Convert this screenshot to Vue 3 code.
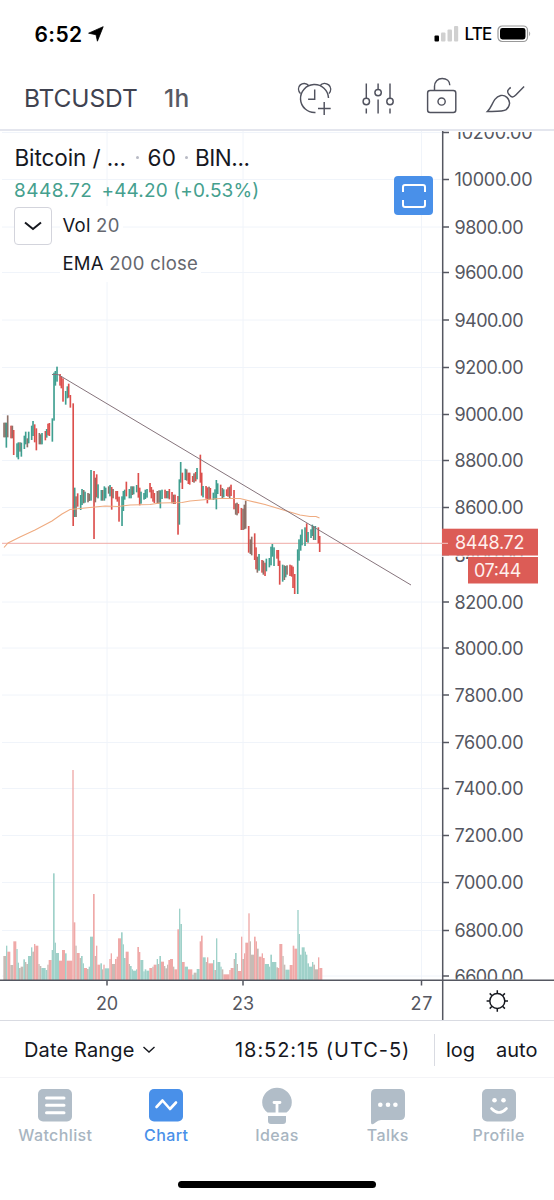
<script setup>
const GREEN = '#3f9f90'
const RED = '#dc4f4c'
const MIXED = '#8d7168'
const palette = { g: GREEN, r: RED, m: MIXED }
const volPalette = { g: '#9fd1c9', r: '#efa9a8', m: '#c6bbb5' }

// price scale labels with their vertical positions
const prices = [
  ['10200.00', 132.5], ['10000.00', 179.5], ['9800.00', 227], ['9600.00', 272.5],
  ['9400.00', 320], ['9200.00', 367.5], ['9000.00', 414.5], ['8800.00', 460.5],
  ['8600.00', 507.5], ['8400.00', 555], ['8200.00', 602], ['8000.00', 648],
  ['7800.00', 695], ['7600.00', 742.5], ['7400.00', 788.5], ['7200.00', 835.5],
  ['7000.00', 882.5], ['6800.00', 930.5], ['6600.00', 976]
].map(([label, y]) => ({ label, y, width: label.length === 8 ? 78 : 69 }))

const days = [
  { label: '20', x: 107 },
  { label: '23', x: 243 },
  { label: '27', x: 421.5 }
]

// candles: centre, high, low, kind (third-pixel units)
const earlyCandles = `12 203 247 m,16 203 247 m,19 203 278 g,23 181 247 m,33 212 250 r,37 212 250 m,41 225 300 r,51 265 307 g,55 262 313 g,60 262 290 m,64 263 305 g,73 242 282 g,77 230 268 g,82 250 277 m,86 230 265 g,95 212 255 g,99 198 243 g,104 208 262 r,109 220 286 r,118 234 268 m,122 238 268 m,126 234 268 g,136 228 256 r,140 222 248 g,144 206 241 r,148 204 243 r,157 190 260 g,162 53 197 g,166 48 92 g,171 35 80 g,180 57 92 r,184 64 100 r,189 70 140 r,197 108 149 g,202 94 130 g,206 86 128 r,211 120 158 r,219.5 145 513 r,224 398 486 g,228 424 486 m,233 415 455 r,242 420 465 g,246 402 450 g,251 405 445 m,255 410 443 g,264 414 442 m,268 416 438 m,273 345 437 g,282 348 552 r,286 368 442 m,290 358 427 r,294 388 430 g,304 405 437 g,308 405 437 m,313 394 437 g,317 398 430 g,326 394 416 m,330 390 424 g,335 396 464 r,339 402 430 m,348 408 433 r,352 408 440 r,357 425 500 r,366 424 513 g,370 408 468 g,374 404 434 g,379 380 424 r,388 402 430 g,393 394 430 g,397 394 420 m,401 394 418 g,410 390 412 g,415 354 428 r,419 398 451 r,423 410 446 g,432 414 434 g,436 404 432 g,441 402 428 g,450 384 412 r,454 396 430 r,459 404 440 r,463 414 444 r,472 408 446 m,477 406 446 m,481 406 460 g,486 404 432 g,495 404 430 r,500 408 430 m,504 408 430 g,508 402 433 r`
const lateCandles = `36 156 190 r,41 164 192 m,45 164 192 r,54 168 284 r,58 118 254 g,62 66 128 g,67 98 147 r,76 86 120 g,80 88 122 m,85 98 132 r,89 98 134 r,98 108 126 r,102 100 128 m,107 96 124 r,111 84 118 g,121 44 128 r,125 98 167 r,129 138 172 g,138 138 176 r,142 142 190 r,147 140 180 m,151 144 178 r,160 158 180 g,165 148 178 g,169 120 208 g,173 130 162 g,182 134 168 r,187 144 176 m,191 148 172 g,200 148 168 r,204 142 170 r,209 140 174 m,213 134 168 r,222 150 208 r,227 190 224 m,231 188 226 m,235 192 220 r,244 204 270 r,249 206 270 m,253 194 268 m,257 182 266 m,266 258 338 r,271 298 342 m,275 290 346 m,284 280 360 r,288 322 388 r,292 350 398 m,297 342 392 g,306 360 398 r,310 362 404 m,315 368 408 r,319 356 394 g,328 354 382 g,333 320 376 g,337 312 350 g,342 322 378 g,351 330 356 r,355 330 378 r,359 362 434 r,368 374 425 g,373 376 420 m,377 378 412 g,381 376 404 m,390 374 408 r,395 376 410 r,399 380 444 r,404 402 462 r,413 328 462 g,417 298 362 g,422 284 332 g,426 268 316 g,435 262 318 g,440 250 306 r,444 276 308 g,453 268 294 g,457 254 288 g,461 258 300 m,466 258 300 g,475 262 310 r,479 288 336 r`
const parseCandles = (src, ox, oy) =>
  src.split(',').map((item) => {
    const [x, hi, lo, kind] = item.split(' ')
    return { x: ox + x / 3 - 0.8, y: oy + hi / 3, h: (lo - hi) / 3, fill: palette[kind] }
  })
const candles = [...parseCandles(earlyCandles, 0, 355), ...parseCandles(lateCandles, 160, 440)]

// volume: right edge, top, kind; every bar starts where the previous one ended
const earlyVolume = `18 588 m,22 557 g,31 575 r,40 615 m,49 544 r,53 567 g,57 608 g,62 624 m,70 620 m,75 598 g,79 606 m,84 612 m,93 588 g,97 562 g,102 575 m,106 552 r,115 557 r,119 612 m,124 618 m,137 624 g,142 630 g,146 614 m,155 600 r,159 570 g,164 340 g,168 548 g,177 579 g,186 602 r,195 570 r,200 580 g,217 602 r,221 30 r,226 487 r,230 557 m,239 579 r,243 594 m,248 588 g,252 610 g,261 624 r,266 627 m,270 620 g,279 530 g,284 402 r,288 588 m,292 557 r,301 614 r,306 610 g,310 628 m,314 614 r,328 625 g,332 597 r,336 580 r,345 612 m,350 597 r,354 590 r,363 535 r,368 517 g,372 553 g,377 594 g,386 575 r,390 612 m,395 618 g,399 628 g,408 632 g,412 628 g,417 561 r,421 576 r,430 600 g,434 634 g,439 628 g,448 632 g,457 624 r,461 620 m,470 614 r,474 597 g,478 612 m,483 588 g,492 605 r,496 618 m,501 625 m,505 614 m,510 600 r`
const lateVolume = `39 297 r,43 320 m,52 328 r,57 208 r,61 146 g,66 192 g,74 306 r,84 320 g,97 328 r,101 344 g,110 338 m,119 327 g,123 244 r,128 227 r,137 292 g,141 306 m,145 292 r,159 310 r,163 300 g,168 330 m,172 235 g,181 306 g,185 320 g,190 328 m,208 343 r,212 330 r,221 324 r,225 297 m,230 279 g,234 312 m,243 333 r,247 230 r,252 297 m,256 280 r,265 248 r,269 160 r,273 244 m,282 284 m,287 230 r,291 244 r,296 266 m,305 290 r,309 280 r,314 294 r,327 312 g,331 320 g,336 284 g,349 306 g,354 322 m,358 324 r,367 252 r,371 288 m,376 314 m,389 329 g,398 315 r,403 257 r,412 266 r,416 150 g,420 222 g,425 284 g,434 262 g,438 275 g,442 284 g,447 310 g,456 320 g,460 306 g,465 314 m,474 328 m,478 292 r,487 324 r`
const parseVolume = (src, ox, oy, start) => {
  let left = start
  return src.split(',').map((item) => {
    const [right, top, kind] = item.split(' ')
    const bar = { x: ox + left / 3, w: (right - left) / 3, y: oy + top / 3, fill: volPalette[kind] }
    bar.h = 980 - bar.y
    left = Number(right)
    return bar
  })
}
const volume = [...parseVolume(earlyVolume, 0, 760, 10), ...parseVolume(lateVolume, 160, 860, 30)]
</script>

<template>
  <div class="screen">
    <header class="status">
      <span class="clock">6:52</span>
      <svg class="loc" width="16" height="16" viewBox="0 0 16 16"><path d="M15.2.7 9.4 15.2 8 8.7.6 7.2Z" fill="#000" stroke="#000" stroke-linejoin="round" stroke-width=".8" /></svg>
      <svg class="signal" width="26" height="18" viewBox="0 0 26 18">
        <rect x=".5" y="10.500" width="4.500" height="6" rx="1" fill="#000" />
        <rect x="7" y="7.500" width="4.500" height="9" rx="1" fill="#d0d0d0" />
        <rect x="13.500" y="4.500" width="4.500" height="12" rx="1" fill="#d0d0d0" />
        <rect x="20" y="1" width="4.200" height="15.500" rx="1" fill="#d0d0d0" />
      </svg>
      <span class="lte">LTE</span>
      <svg class="battery" width="36" height="18" viewBox="0 0 36 18">
        <rect x="1" y="1" width="29.500" height="15.500" rx="4.200" fill="none" stroke="#999" stroke-width="1.200" />
        <rect x="3" y="3" width="25.500" height="11.500" rx="2.400" fill="#000" />
        <path d="M32.200 6.300q2 2.400 0 5Z" fill="#999" />
      </svg>
    </header>

    <div class="toolbar">
      <span class="symbol">BTCUSDT</span>
      <span class="interval">1h</span>
      <svg class="tools" width="254" height="50" viewBox="290 72 254 50" fill="none" stroke="#50525e" stroke-width="1.450">
        <path d="M315.500 111.500a14 14 0 1 1 13-14.500" />
        <path d="M300.500 92.600c-2.600-3-2.600-6.500-.2-8.700 2.400-2.100 6-2.100 8.500.8M320 84.700c2.400-2.900 6-2.900 8.700-.8 2.600 2.400 2.600 5.900.2 8.700" />
        <path d="M314.700 88.500v9.700h-6.600M318 107.500h12.700M324.200 101v13" />
        <path d="M366.300 82.500v14.800M366.300 107.500v5M378.100 82.500v5.800M378.100 98.500v14M390 82.500v14.800M390 107.500v5" />
        <circle cx="366.300" cy="100.500" r="3.200" /><circle cx="378.100" cy="91.600" r="3.200" /><circle cx="390" cy="100.500" r="3.200" />
        <rect x="427.600" y="89.500" width="28.200" height="22" rx="2.500" />
        <path d="M434.500 89.500v-4c0-4.700 3.200-8 7.700-8s7.600 2.500 7.600 6.800" />
        <circle cx="441.600" cy="100.500" r="3.600" />
        <path d="M487.500 110.400c3.400-3 4.500-8 7.400-12 3.200-4.300 8.400-5.400 12-2 3.800 3.600 3.500 8.700-.7 12.200-2.700 2.100-7 1.800-18.700 1.800ZM510.800 86.500c-3 1.700-4.200 4-2 6.800 2.500 3.300 4.400 3.500 7 .8l8.300-8.600" />
      </svg>
    </div>

    <main class="chart">
      <svg class="plot" width="554" height="889" viewBox="0 131 554 889">
        <g stroke="#f0f4fa" stroke-width="1">
          <line v-for="p in prices" :key="p.label" x1="2" x2="442" :y1="p.y" :y2="p.y" />
          <line v-for="d in days" :key="d.label" :x1="d.x" :x2="d.x" y1="131" y2="980" />
        </g>
        <rect v-for="(b, i) in volume" :key="'v' + i" :x="b.x" :y="b.y" :width="b.w" :height="b.h" :fill="b.fill" />
        <line x1="2" x2="442" y1="543.300" y2="543.300" stroke="#efaaa6" />
        <rect v-for="(c, i) in candles" :key="'c' + i" :x="c.x" :y="c.y" width="1.650" :height="c.h" :fill="c.fill" />
        <path d="M4 547.500 8 543 20 537 35 530 52 521 62 514 70 509.500 80 508.500 90 507.500 105 506 118 506.500 130 505 150 504.500 160 503 182 502.500 190 501 207 499.500 220 498.500 240 498.500 250 501 265 504.500 285 510.500 300 515 310 516.500 316 516.500 319.500 518" fill="none" stroke="#efab80" stroke-width="1.100" />
        <path d="M52 374.500h6l353 210.500" fill="none" stroke="#86747c" stroke-width="1" />

        <g stroke="#555761" stroke-width="1.500">
          <path d="M442.700 131v889M0 980.300h554" />
          <line v-for="p in prices" :key="'t' + p.label" x1="443" x2="449" :y1="p.y" :y2="p.y" />
          <line v-for="d in days" :key="'d' + d.label" :x1="d.x" :x2="d.x" y1="980" y2="985.500" />
        </g>
        <clipPath id="scale"><rect x="450" y="132" width="104" height="847.500" /></clipPath>
        <g class="scale-text" clip-path="url(#scale)">
          <text v-for="p in prices" :key="'l' + p.label" x="454.500" :y="p.y + 6.800" :textLength="p.width">{{ p.label }}</text>
        </g>
        <g class="scale-text" text-anchor="middle">
          <text v-for="d in days" :key="'x' + d.label" :x="d.x" y="1009.600" textLength="22">{{ d.label }}</text>
        </g>

        <rect x="442" y="528.700" width="96" height="27" fill="#dc5c56" />
        <rect x="442" y="555.700" width="96" height="1.300" fill="#fff" opacity=".8" />
        <rect x="468" y="557" width="70" height="26.500" fill="#dc5c56" />
        <path d="M442 543.300h6" stroke="#f5c9c5" />
        <g class="scale-text light">
          <text x="455" y="548.700" textLength="69.500">8448.72</text>
          <text x="474" y="576.700" textLength="47.500">07:44</text>
        </g>

        <g stroke="#16181f" stroke-width="1.500" fill="none">
          <circle cx="497.300" cy="1001" r="7.500" />
          <path d="M497.300 990.300v3M497.300 1008.700v3M486.600 1001h3M505 1001h3M489.700 993.400l2.100 2.100M502.800 1006.500l2.100 2.100M489.700 1008.600l2.100-2.100M502.800 995.500l2.100-2.100" />
        </g>
      </svg>

      <section class="legend">
        <div class="title"><span class="name">Bitcoin / ...</span><i></i><span class="res">60</span><i></i><span class="exch">BIN...</span></div>
        <div class="quote"><span class="last">8448.72</span><span class="change">+44.20 (+0.53%)</span></div>
        <div class="studies">
          <button class="toggle"><svg width="20" height="12" viewBox="0 0 20 12"><path d="M2 2.500 10 9l8-6.500" fill="none" stroke="#16181f" stroke-width="2" /></svg></button>
          <div class="list">
            <div class="study vol">Vol <em>20</em></div>
            <div class="study ema">EMA <em>200 close</em></div>
          </div>
        </div>
      </section>

      <button class="fullscreen"><svg width="26" height="26" viewBox="0 0 26 26"><path d="M2 9V4q0-2 2-2h18q2 0 2 2v5M2 17v5q0 2 2 2h18q2 0 2-2v-5" fill="none" stroke="#fff" stroke-width="2" /></svg></button>
    </main>

    <div class="rangebar">
      <span class="range">Date Range</span>
      <svg class="caret" width="14" height="9" viewBox="0 0 14 9"><path d="M1.500 2 7 7l5.500-5" fill="none" stroke="#16181f" stroke-width="1.400" /></svg>
      <span class="time">18:52:15 (UTC-5)</span>
      <span class="log">log</span>
      <span class="auto">auto</span>
    </div>

    <nav class="tabs">
      <div class="tab">
        <svg width="38" height="38" viewBox="0 0 38 38"><rect x="2" y="2" width="34" height="32.500" rx="5" fill="currentColor" /><path d="M10.500 11h17.500M10.500 18.300h17.500M10.500 25.700h17.500" stroke="#fff" stroke-width="3" stroke-linecap="round" /></svg>
        <span class="watch">Watchlist</span>
      </div>
      <div class="tab active">
        <svg width="38" height="38" viewBox="0 0 38 38"><rect x="2" y="2" width="34" height="32.500" rx="5" fill="currentColor" /><path d="m9.500 20 6-6.500 7.500 8.500 6-6.500" fill="none" stroke="#fff" stroke-width="2.600" stroke-linecap="round" stroke-linejoin="round" /></svg>
        <span class="chartlabel">Chart</span>
      </div>
      <div class="tab">
        <svg width="38" height="38" viewBox="0 0 38 38"><path d="M9.500 25.500C6 23 4.200 19.500 4.200 15.500a14.800 14.800 0 0 1 29.600 0c0 4-1.800 7.500-5.300 10ZM10 29h18v5q0 3-3 3H13q-3 0-3-3Z" fill="currentColor" /><path d="M16 15.500h6M19 15.500V26" stroke="#fff" stroke-width="2.800" stroke-linecap="round" /></svg>
        <span class="ideas">Ideas</span>
      </div>
      <div class="tab">
        <svg width="38" height="38" viewBox="0 0 38 38"><path d="M7 2h24q5 0 5 5v21q0 5-5 5H12q-3 0-5.500 2.500Q4 38 2.500 37 2 36.700 2 35V7q0-5 5-5Z" fill="currentColor" /><g fill="#fff"><circle cx="11.300" cy="17.700" r="2.300" /><circle cx="19" cy="17.700" r="2.300" /><circle cx="26.400" cy="17.700" r="2.300" /></g></svg>
        <span class="talks">Talks</span>
      </div>
      <div class="tab">
        <svg width="38" height="38" viewBox="0 0 38 38"><rect x="2" y="2" width="34" height="32.500" rx="5" fill="currentColor" /><g fill="#fff"><circle cx="14.500" cy="13.300" r="2.300" /><circle cx="23.500" cy="13.300" r="2.300" /></g><path d="M11.500 21.500q7.500 8 15 0" fill="none" stroke="#fff" stroke-width="2.600" stroke-linecap="round" /></svg>
        <span class="profile">Profile</span>
      </div>
    </nav>
    <div class="home"></div>
  </div>
</template>

<style>
body { margin: 0; background: #fff; }
</style>

<style scoped>
.screen { width: 554px; height: 1200px; display: flex; flex-direction: column; overflow: hidden; background: #fff; font-family: Inter, "Liberation Sans", sans-serif; color: #16181f; }
.screen span, .study { white-space: nowrap; }
svg { display: block; flex: none; }
button { padding: 0; display: flex; align-items: center; justify-content: center; }

.status { height: 68px; box-sizing: border-box; flex: none; display: flex; align-items: center; padding-left: 34.500px; color: #000; }
.clock { width: 49px; font-size: 21px; font-weight: 600; letter-spacing: .4px; }
.loc { margin-left: 4.500px; }
.signal { margin-left: 329.500px; }
.lte { width: 27px; margin-left: 5px; font-size: 17px; font-weight: 500; letter-spacing: -.8px; }
.battery { margin-left: 5px; }

.toolbar { height: 63px; box-sizing: border-box; flex: none; display: flex; align-items: center; padding: 0 0 2px 24px; border-bottom: 2px solid #e4e6ee; color: #40424f; font-size: 24.500px; }
.symbol { width: 113px; letter-spacing: -.1px; }
.interval { width: 28px; margin-left: 27px; color: #585a64; font-weight: 500; letter-spacing: .3px; }
.tools { margin-left: 98px; }

.chart { height: 889px; flex: none; position: relative; }
.scale-text { font-size: 18px; fill: #555761; }
.light { fill: #fff0ee; }
.legend { position: absolute; left: 14px; top: 12px; }
.title { display: flex; align-items: center; height: 28px; font-size: 22.500px; }
.title i { width: 3px; height: 3px; border-radius: 50%; background: #b8bac4; }
.name { width: 121.500px; padding-left: .5px; letter-spacing: -.1px; }
.res { margin-left: 8.500px; width: 37px; letter-spacing: .3px; }
.exch { margin-left: 7.500px; letter-spacing: -.45px; }
.quote { display: flex; align-items: center; height: 34px; padding-top: 4px; box-sizing: border-box; font-size: 19px; color: #459f8e; }
.last { width: 87.500px; letter-spacing: .45px; }
.change { letter-spacing: .12px; }
.studies { display: flex; align-items: flex-start; }
.toggle { width: 38px; height: 38px; box-sizing: border-box; border: 1.500px solid #d3d4dc; border-radius: 4px; background: #fff; margin-top: 2px; }
.list { margin-left: 7.500px; padding-top: 1px; }
.study { height: 38px; line-height: 38px; padding: 0 3px; font-size: 18.500px; width: max-content; letter-spacing: .25px; background: #fff; }
.study em { font-style: normal; color: #65676f; }
.fullscreen { position: absolute; left: 394px; top: 45px; width: 39px; height: 39px; border: 0; border-radius: 4px; background: #4990e9; }

.rangebar { height: 58px; box-sizing: border-box; flex: none; display: flex; align-items: center; padding: 1px 0 0 24px; border-top: 1.500px solid #d9dbe2; border-bottom: 1px solid #f4f4f7; font-size: 20px; }
.range { width: 111px; letter-spacing: .15px; }
.caret { margin-left: 7px; }
.time { width: 175px; margin-left: 79px; letter-spacing: .95px; }
.log { margin-left: 24px; padding-left: 11px; line-height: 32px; border-left: 1px solid #d9dbe2; width: 38px; }
.auto { margin-left: 12px; }

.tabs { height: 91px; flex: none; display: grid; grid-template-columns: repeat(5, 1fr); padding-top: 9px; box-sizing: border-box; }
.tab { display: flex; flex-direction: column; align-items: center; color: #b1bdc8; font-size: 16px; font-weight: 500; }
.tab span { line-height: 20px; color: #a8b5c1; letter-spacing: .4px; }
.tab.active, .tab.active span { color: #4990e9; }
.home { width: 198px; height: 7px; flex: none; margin: 12px auto 0; border-radius: 4px; background: #000; }
</style>
